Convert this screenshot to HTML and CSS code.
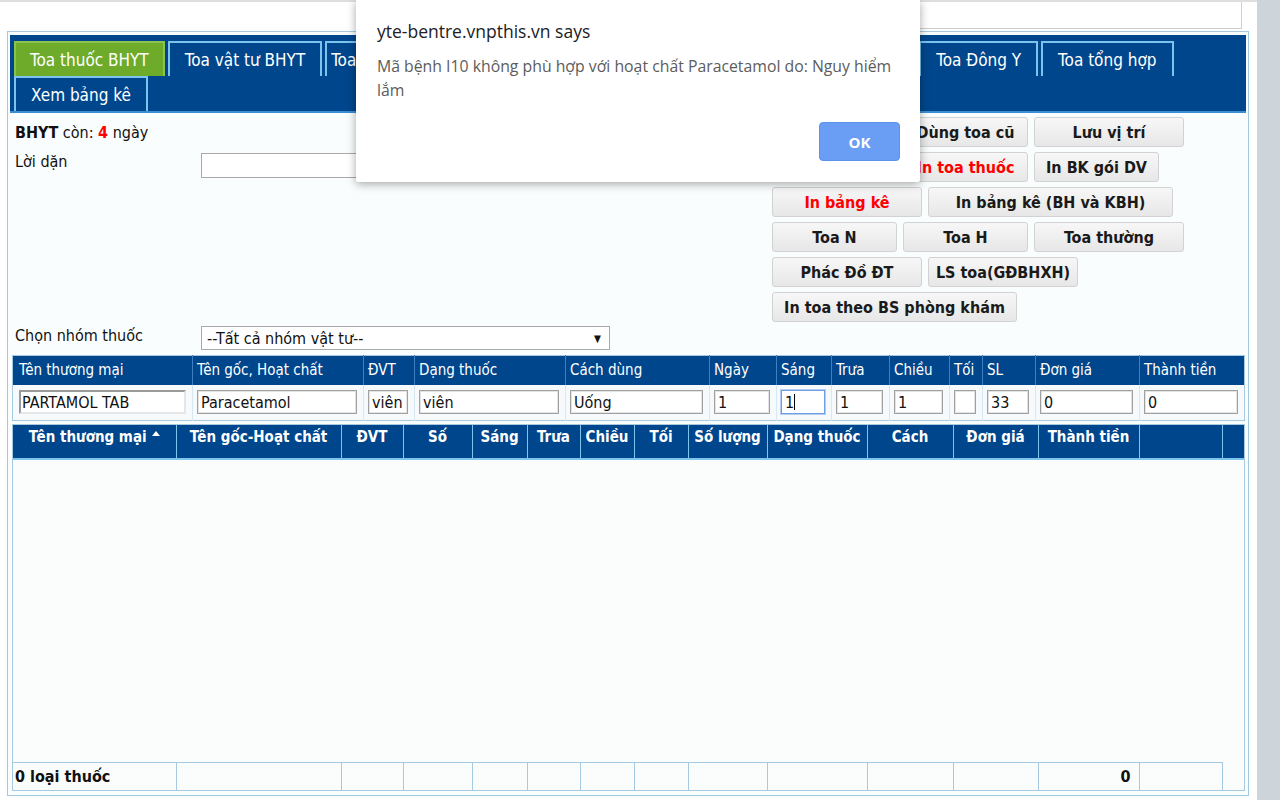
FILE: index.html
```html
<!DOCTYPE html>
<html lang="vi">
<head>
<meta charset="utf-8">
<title>Kê toa thuốc</title>
<link rel="stylesheet" href="styles.css">
</head>
<body>
<div class="screen">
  <div class="page">
    <div class="topbar"><div class="topbox"></div></div>
    <div class="panel">
      <div class="tabs">
        <div class="tab active">Toa thuốc BHYT</div>
        <div class="tab">Toa vật tư BHYT</div>
        <div class="tab hid">Toa thuốc dịch vụ</div>
        <div class="tab hid">Toa vật tư dịch vụ</div>
        <div class="tab hid">Toa mua ngoài</div>
        <div class="tab hid">Toa nhà thuốc</div>
        <div class="tab">Toa Đông Y</div>
        <div class="tab">Toa tổng hợp</div>
        <div class="tab">Xem bảng kê</div>
      </div>
      <div class="content">
        <div class="formtop">
          <div class="formleft">
            <div class="bhyt"><b>BHYT</b> còn: <b class="red">4</b> ngày</div>
            <div class="field"><span class="lbl">Lời dặn</span><input class="loidan" type="text"></div>
          </div>
          <div class="btns">
            <div class="brow"><button class="btn w125">Lưu toa</button><button class="btn w125">Dùng toa cũ</button><button class="btn w150">Lưu vị trí</button></div>
            <div class="brow"><button class="btn w125">Xóa toa</button><button class="btn w125 red">In toa thuốc</button><button class="btn w125">In BK gói DV</button></div>
            <div class="brow"><button class="btn w150 red">In bảng kê</button><button class="btn w245">In bảng kê (BH và KBH)</button></div>
            <div class="brow"><button class="btn w125">Toa N</button><button class="btn w125">Toa H</button><button class="btn w150">Toa thường</button></div>
            <div class="brow"><button class="btn w150">Phác Đồ ĐT</button><button class="btn w150">LS toa(GĐBHXH)</button></div>
            <div class="brow"><button class="btn w245">In toa theo BS phòng khám</button></div>
          </div>
        </div>
        <div class="field nhom"><span class="lbl">Chọn nhóm thuốc</span><div class="select"><span>--Tất cả nhóm vật tư--</span><span class="arrow">▼</span></div></div>

        <table class="entry">
          <colgroup>
            <col class="e1"><col class="e2"><col class="e3"><col class="e4"><col class="e5"><col class="e6"><col class="e7"><col class="e8"><col class="e9"><col class="e10"><col class="e11"><col class="e12"><col class="e13">
          </colgroup>
          <thead>
            <tr><th>Tên thương mại</th><th>Tên gốc, Hoạt chất</th><th>ĐVT</th><th>Dạng thuốc</th><th>Cách dùng</th><th>Ngày</th><th>Sáng</th><th>Trưa</th><th>Chiều</th><th>Tối</th><th>SL</th><th>Đơn giá</th><th>Thành tiền</th></tr>
          </thead>
          <tbody>
            <tr>
              <td><input class="ro" type="text" value="PARTAMOL TAB" readonly></td>
              <td><input type="text" value="Paracetamol"></td>
              <td><input type="text" value="viên"></td>
              <td><input type="text" value="viên"></td>
              <td><input type="text" value="Uống"></td>
              <td><input type="text" value="1"></td>
              <td><span class="fwrap"><input class="focus" type="text" value="1"><span class="caret"></span></span></td>
              <td><input type="text" value="1"></td>
              <td><input type="text" value="1"></td>
              <td><input type="text" value=""></td>
              <td><input type="text" value="33"></td>
              <td><input type="text" value="0"></td>
              <td><input type="text" value="0"></td>
            </tr>
          </tbody>
        </table>

        <div class="grid">
          <table class="ghead">
            <colgroup>
              <col class="g1"><col class="g2"><col class="g3"><col class="g4"><col class="g5"><col class="g6"><col class="g7"><col class="g8"><col class="g9"><col class="g10"><col class="g11"><col class="g12"><col class="g13"><col class="g14"><col class="g15">
            </colgroup>
            <tr><th>Tên thương mại<span class="sort"></span></th><th>Tên gốc-Hoạt chất</th><th>ĐVT</th><th>Số</th><th>Sáng</th><th>Trưa</th><th>Chiều</th><th>Tối</th><th>Số lượng</th><th>Dạng thuốc</th><th>Cách</th><th>Đơn giá</th><th>Thành tiền</th><th></th><th></th></tr>
          </table>
          <div class="gbody"></div>
          <table class="gfoot">
            <colgroup>
              <col class="g1"><col class="g2"><col class="g3"><col class="g4"><col class="g5"><col class="g6"><col class="g7"><col class="g8"><col class="g9"><col class="g10"><col class="g11"><col class="g12"><col class="g13"><col class="g14">
            </colgroup>
            <tr><td class="tl">0 loại thuốc</td><td></td><td></td><td></td><td></td><td></td><td></td><td></td><td></td><td></td><td></td><td></td><td class="tr">0</td><td></td></tr>
          </table>
        </div>
      </div>
    </div>
  </div>
  <div class="sbar"></div>

  <div class="dialog">
    <div class="dtitle">yte-bentre.vnpthis.vn says</div>
    <div class="dmsg">Mã bệnh I10 không phù hợp với hoạt chất Paracetamol do: Nguy hiểm lắm</div>
    <div class="dfoot"><button class="ok">OK</button></div>
  </div>
</div>
</body>
</html>
```

FILE: styles.css
```css
* { box-sizing: border-box; }

body {
  margin: 0;
  background: #fff;
  color: #111;
  font-family: "DejaVu Sans Condensed", "DejaVu Sans", sans-serif;
  font-stretch: condensed;
  font-size: 16px;
}

.screen {
  position: relative;
  display: flex;
  width: 1280px;
  height: 800px;
  overflow: hidden;
}

.page { width: 1257px; }

.sbar { width: 23px; background: #cdd4da; }

.topbar {
  height: 31px;
  border-top: 2px solid #dedede;
  display: flex;
  justify-content: flex-end;
  padding-right: 15px;
}

.topbox {
  width: 540px;
  height: 27px;
  border-right: 1px solid #cfcfcf;
  border-bottom: 1px solid #cfcfcf;
}

.panel {
  margin-left: 7px;
  width: 1242px;
  height: 765px;
  border: 1px solid #a6c9e2;
  padding: 3px 2px 0;
  background: #fafdfd;
}

.tabs {
  background: #00468c;
  border-bottom: 2px solid #3a8ed4;
  padding: 6px 4px 0;
  display: flex;
  flex-wrap: wrap;
  column-gap: 3px;
}

.tab {
  height: 35px;
  padding: 0 15px;
  border: 2px solid #7cc3ee;
  border-bottom: 0;
  color: #fff;
  font-size: 17px;
  display: flex;
  align-items: center;
  justify-content: center;
  white-space: nowrap;
}

.tab.active { background: #6eab2b; border-color: #8cc34f; padding: 0 14px; }
.tab.hid { width: 145.5px; overflow: hidden; }

.formtop { display: flex; height: 209px; }

.formleft { width: 762px; padding: 11px 0 0 5px; }

.bhyt { height: 18px; line-height: 18px; }
.red { color: #f00; }

.field { display: flex; align-items: flex-start; margin-top: 11px; }
.lbl { width: 186px; line-height: 18px; flex: none; }

.loidan {
  width: 560px;
  height: 25px;
  border: 1px solid #a9a9a9;
  background: #fff;
  font: inherit;
}

.btns { padding-top: 4px; display: flex; flex-direction: column; gap: 5px; }
.brow { display: flex; gap: 6px; }

.btn {
  height: 30px;
  padding: 0;
  font: inherit;
  font-weight: bold;
  color: #1a1a1a;
  background: linear-gradient(#f7f7f7, #e7e7e7);
  border: 1px solid #d2d2d2;
  border-radius: 3px;
}
.btn.red { color: #f00; }
.w125 { width: 125px; }
.w150 { width: 150px; }
.w245 { width: 245px; }

.nhom { margin-top: 4px; padding-left: 5px; }
.nhom .lbl { line-height: 20px; }

.select {
  width: 409px;
  height: 24px;
  border: 1px solid #a9a9a9;
  background: #fff;
  display: flex;
  align-items: center;
  justify-content: space-between;
  padding: 0 8px 0 5px;
}
.arrow { font-size: 10px; }

/* entry table */
.entry {
  margin: 5px 2px 0;
  width: 1232px;
  border-collapse: collapse;
  table-layout: fixed;
  border: 1px solid #a6c9e2;
}
.e1 { width: 180px; } .e2 { width: 171px; } .e3 { width: 51px; } .e4 { width: 151px; }
.e5 { width: 144px; } .e6 { width: 67px; } .e7 { width: 55px; } .e8 { width: 58px; }
.e9 { width: 60px; } .e10 { width: 33px; } .e11 { width: 53px; } .e12 { width: 104px; } .e13 { width: 105px; }

.entry th {
  background: #00468c;
  color: #fff;
  font-weight: normal;
  font-size: 15px;
  height: 29px;
  text-align: left;
  padding: 0 4px 0 4px;
  border-left: 1px solid #3e7fc0;
  white-space: nowrap;
  overflow: hidden;
}
.entry th:first-child, .entry td:first-child { padding-left: 6px; border-left: 0; }

.entry td {
  height: 36px;
  padding: 0 6px 0 4px;
  background: #f6fafc;
  border-left: 1px solid #d7e8f2;
}

.entry input {
  display: block;
  width: 100%;
  height: 24px;
  border: 1px solid #a0a0a0;
  box-shadow: inset 0 0 0 1px #e4e4e4;
  background: #fff;
  font: inherit;
  color: #111;
  padding: 0 3px;
}
.entry input.ro {
  border-top: 2px solid #9a9a9a;
  border-left: 2px solid #9a9a9a;
  border-right: 2px solid #e6e6e6;
  border-bottom: 2px solid #e6e6e6;
  box-shadow: none;
  padding: 0 1px;
}
.entry input.focus {
  border: 1px solid #6f9fe3;
  box-shadow: 0 0 0 1px #b5cdf2;
  outline: none;
}
.fwrap { position: relative; display: block; }
.caret {
  position: absolute;
  left: 13px;
  top: 4px;
  width: 1px;
  height: 16px;
  background: #000;
}

/* grid */
.grid {
  margin: 3px 2px 0;
  width: 1233px;
  border: 1px solid #a6c9e2;
  background: #fbfdfd;
}
.ghead, .gfoot { border-collapse: collapse; table-layout: fixed; }
.ghead { width: 1231px; }
.gfoot { width: 1209px; }

.g1 { width: 163px; } .g2 { width: 165px; } .g3 { width: 62px; } .g4 { width: 69px; }
.g5 { width: 55px; } .g6 { width: 53px; } .g7 { width: 54px; } .g8 { width: 54px; }
.g9 { width: 79px; } .g10 { width: 100px; } .g11 { width: 86px; } .g12 { width: 85px; }
.g13 { width: 101px; } .g14 { width: 83px; } .g15 { width: 22px; }

.ghead th {
  background: #00468c;
  color: #fff;
  font-size: 15px;
  font-weight: bold;
  height: 34px;
  line-height: 20px;
  vertical-align: top;
  padding: 2px 2px 0;
  border-left: 1px solid #7cc3ee;
  border-bottom: 2px solid #7cc3ee;
  white-space: nowrap;
  overflow: hidden;
}
.ghead th:first-child { border-left: 0; }

.sort {
  display: inline-block;
  width: 0;
  height: 0;
  margin-left: 5px;
  border-left: 4px solid transparent;
  border-right: 4px solid transparent;
  border-bottom: 5px solid #fff;
  vertical-align: 6px;
}

.gbody { height: 302px; }

.gfoot td {
  height: 27px;
  border: 1px solid #a6c9e2;
  border-bottom: 0;
  font-weight: bold;
  padding: 0 2px;
}
.gfoot td:first-child { border-left: 0; }
.gfoot .tl { padding-left: 2px; white-space: nowrap; }
.gfoot .tr { text-align: right; padding-right: 8px; }

/* alert dialog */
.dialog {
  position: absolute;
  left: 356px;
  top: 0;
  width: 564px;
  height: 182px;
  background: #fff;
  border-radius: 0 0 2px 2px;
  box-shadow: 0 2px 10px rgba(0, 0, 0, 0.35);
  padding: 19px 20px 21px 21px;
  font-family: "Open Sans", "Noto Sans", sans-serif;
  font-stretch: normal;
  display: flex;
  flex-direction: column;
}
.dtitle { font-size: 17.5px; line-height: 24px; color: #202124; }
.dmsg { margin-top: 11px; font-size: 15.8px; line-height: 24px; color: #5c5c5c; }
.dfoot { margin-top: auto; display: flex; justify-content: flex-end; }
.ok {
  width: 81px;
  height: 39px;
  background: #6a9ef4;
  border: 1px solid #5d92ea;
  border-radius: 4px;
  color: #fff;
  font-family: "Open Sans", "Noto Sans", sans-serif;
  font-stretch: normal;
  font-size: 15px;
  font-weight: 700;
}
```
